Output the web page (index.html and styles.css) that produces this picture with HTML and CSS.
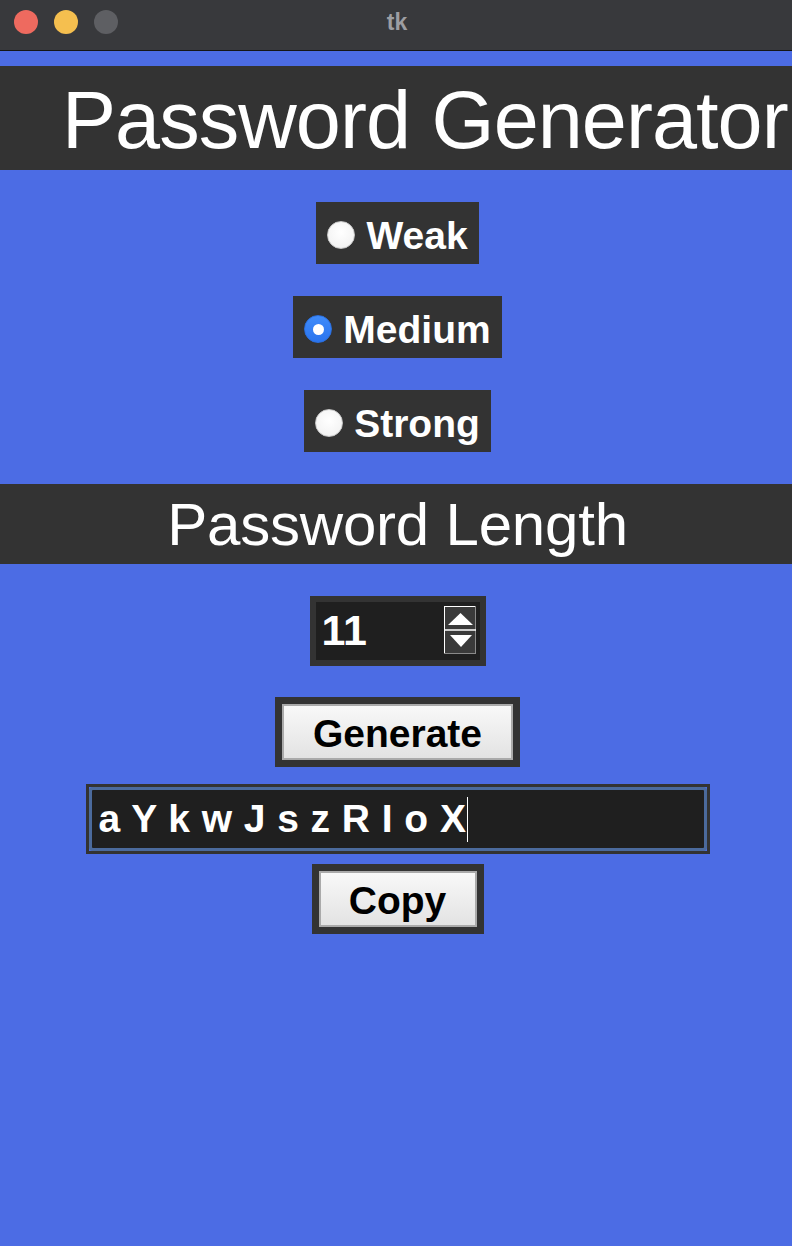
FILE: index.html
```html
<!DOCTYPE html>
<html lang="en">
<head>
<meta charset="utf-8">
<title>tk</title>
<link rel="stylesheet" href="styles.css">
</head>
<body>
<div class="window">
  <div class="titlebar">
    <div class="lights">
      <span class="light red"></span>
      <span class="light yellow"></span>
      <span class="light gray"></span>
    </div>
    <div class="title">tk</div>
    <div></div>
  </div>
  <main class="content">
    <div class="band band-title">Password Generator</div>
    <div class="options">
      <div class="radio"><span class="dot"></span><span class="label">Weak</span></div>
      <div class="radio"><span class="dot checked"></span><span class="label">Medium</span></div>
      <div class="radio"><span class="dot"></span><span class="label">Strong</span></div>
    </div>
    <div class="band band-length">Password Length</div>
    <div class="controls">
      <div class="spin">
        <span class="spin-value">11</span>
        <svg class="spin-arrows" width="32" height="48" viewBox="0 0 32 48">
          <rect x="0" y="0" width="32" height="48" fill="#3a3a3a"/>
          <line x1="0" y1="0.5" x2="32" y2="0.5" stroke="#ffffff" stroke-width="1"/>
          <line x1="0.5" y1="0" x2="0.5" y2="48" stroke="#ffffff" stroke-width="1"/>
          <line x1="31.5" y1="0" x2="31.5" y2="48" stroke="#8a8a8a" stroke-width="1"/>
          <line x1="0" y1="47.5" x2="32" y2="47.5" stroke="#8a8a8a" stroke-width="1"/>
          <line x1="0" y1="24" x2="32" y2="24" stroke="#ffffff" stroke-width="1.5"/>
          <polygon points="4,19 29,19 16.5,7" fill="#ffffff"/>
          <polygon points="6,29 28,29 17,41" fill="#ffffff"/>
        </svg>
      </div>
      <div class="btn-frame btn-generate"><div class="btn">Generate</div></div>
      <div class="entry">
        <div class="entry-ring"><span class="entry-text">a Y k w J s z R I o X</span><span class="cursor"></span></div>
      </div>
      <div class="btn-frame btn-copy"><div class="btn">Copy</div></div>
    </div>
  </main>
</div>
</body>
</html>
```

FILE: styles.css
```css
html, body {
  margin: 0;
  padding: 0;
}

body {
  background: #4c6ce4;
  font-family: "Liberation Sans", Arial, sans-serif;
  width: 792px;
  height: 1246px;
  overflow: hidden;
}

.window {
  display: flex;
  flex-direction: column;
}

.titlebar {
  height: 51px;
  box-sizing: border-box;
  padding-bottom: 6px;
  background: #38393c;
  border-bottom: 1px solid #151515;
  display: grid;
  grid-template-columns: 1fr auto 1fr;
  align-items: center;
}

.lights {
  display: flex;
  gap: 16px;
  padding-left: 14px;
}

.light {
  width: 24px;
  height: 24px;
  border-radius: 50%;
  display: block;
}

.light.red { background: #ee6a5f; }
.light.yellow { background: #f5bf4f; }
.light.gray { background: #5e5f63; }

.title {
  color: #9d9ea2;
  font-weight: bold;
  font-size: 23px;
  line-height: 44px;
  padding-left: 2px;
}

.content {
  padding-top: 15px;
  display: flex;
  flex-direction: column;
}

.band {
  background: #333333;
  color: #ffffff;
  white-space: nowrap;
  overflow: hidden;
  box-sizing: border-box;
}

.band-title {
  height: 104px;
  padding-top: 4px;
  padding-left: 62px;
  font-size: 81px;
  line-height: 100px;
  letter-spacing: -0.95px;
}

.band-length {
  height: 80px;
  padding-top: 2px;
  padding-left: 3px;
  text-align: center;
  font-size: 60px;
  line-height: 78px;
  letter-spacing: -0.2px;
}

.options {
  display: flex;
  flex-direction: column;
  align-items: center;
  gap: 32px;
  padding: 32px 0 32px 3px;
}

.radio {
  display: flex;
  align-items: center;
  gap: 11px;
  height: 62px;
  padding: 0 11px;
  background: #333333;
  box-sizing: border-box;
}

.dot {
  width: 28px;
  height: 28px;
  border-radius: 50%;
  box-sizing: border-box;
  margin-top: 4px;
  background: radial-gradient(circle at 50% 40%, #ffffff 0%, #f4f4f4 70%, #dedede 100%);
  border: 1px solid #c9c9c9;
  display: flex;
  align-items: center;
  justify-content: center;
}

.dot.checked {
  background: linear-gradient(#3f8bfa, #2a74ee);
  border: 1px solid #2a6fe0;
}

.dot.checked::after {
  content: "";
  width: 11px;
  height: 11px;
  border-radius: 50%;
  background: #ffffff;
}

.label {
  color: #ffffff;
  font-weight: bold;
  font-size: 39px;
  line-height: 56px;
  padding-top: 6px;
}

.controls {
  display: flex;
  flex-direction: column;
  align-items: center;
  padding: 32px 0 0 3px;
}

.spin {
  width: 176px;
  height: 70px;
  box-sizing: border-box;
  border: 6px solid #333333;
  background: #1f1f1f;
  display: flex;
  align-items: center;
  padding: 0 4px 0 6px;
}

.spin-value {
  color: #ffffff;
  font-weight: bold;
  font-size: 43px;
  line-height: 54px;
  padding-bottom: 2px;
}

.spin-arrows {
  margin-left: auto;
  margin-bottom: 3px;
  display: block;
}

.btn-frame {
  height: 70px;
  box-sizing: border-box;
  border: 7px solid #333333;
  display: flex;
}

.btn-generate {
  width: 245px;
  margin-top: 31px;
}

.btn-copy {
  width: 172px;
  margin-top: 10px;
}

.btn {
  flex: 1;
  box-sizing: border-box;
  border: 2px solid #aaaaaa;
  background: linear-gradient(#f8f8f8, #e3e3e3);
  color: #000000;
  font-weight: bold;
  font-size: 39px;
  line-height: 51px;
  padding-top: 2px;
  text-align: center;
}

.entry {
  margin-top: 17px;
  width: 624px;
  height: 70px;
  box-sizing: border-box;
  border: 3px solid #333333;
  display: flex;
}

.entry-ring {
  flex: 1;
  box-sizing: border-box;
  border: 3px solid #4b6a9c;
  border-radius: 4px;
  background: #1f1f1f;
  display: flex;
  align-items: center;
  padding-left: 7px;
}

.entry-text {
  color: #ffffff;
  font-weight: bold;
  font-size: 39px;
  line-height: 58px;
  letter-spacing: 0.45px;
  white-space: pre;
}

.cursor {
  display: block;
  width: 1px;
  height: 45px;
  background: #ffffff;
  margin-left: 1px;
  margin-top: 1px;
}
```
